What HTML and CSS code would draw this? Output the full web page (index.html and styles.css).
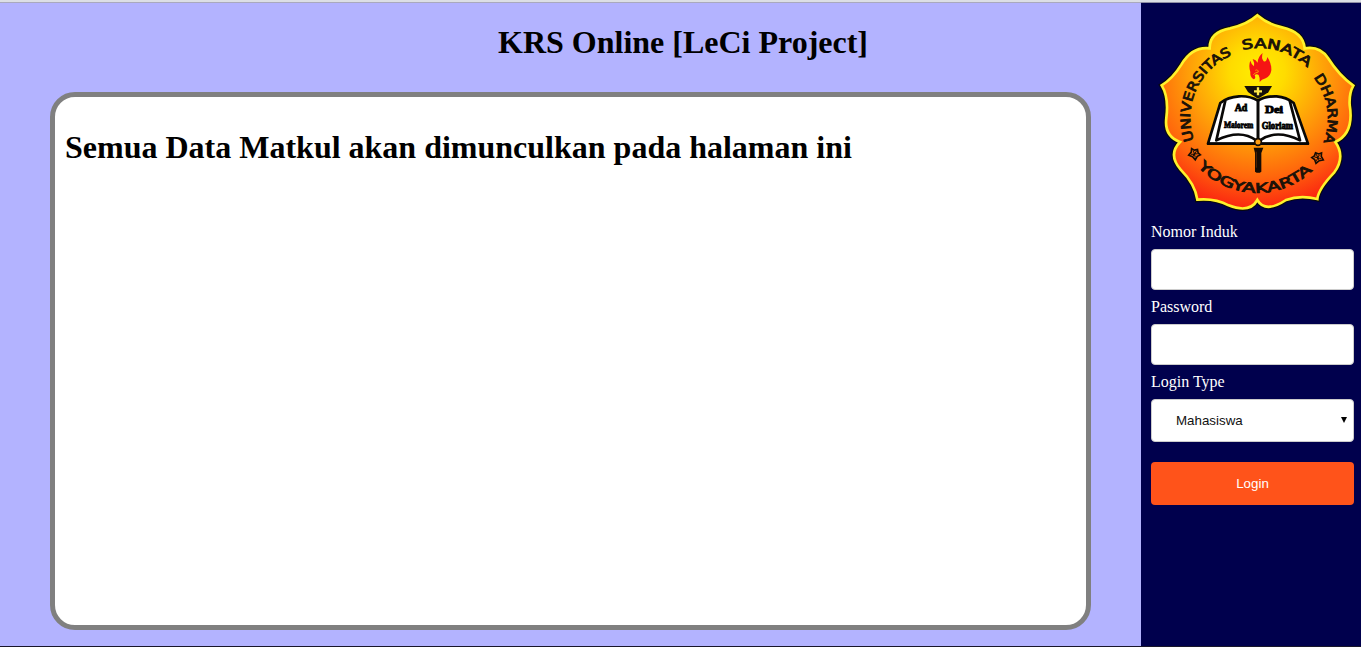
FILE: index.html
```html
<!DOCTYPE html>
<html lang="id">
<head>
<meta charset="utf-8">
<title>KRS Online</title>
<link rel="stylesheet" href="styles.css">
</head>
<body>
<div class="page">
  <main class="main">
    <h1 class="title">KRS Online [LeCi Project]</h1>
    <section class="panel">
      <h1 class="heading">Semua Data Matkul akan dimunculkan pada halaman ini</h1>
    </section>
  </main>
  <aside class="sidebar">
    <svg class="logo" viewBox="0 9 660 645" role="img" aria-label="Universitas Sanata Dharma Yogyakarta">
      <defs>
        <radialGradient id="glow" gradientUnits="userSpaceOnUse" cx="350" cy="215" r="410">
          <stop offset="0" stop-color="#ffee00"/>
          <stop offset=".2" stop-color="#ffdc00"/>
          <stop offset=".5" stop-color="#ff9f08"/>
          <stop offset=".78" stop-color="#ff650c"/>
          <stop offset="1" stop-color="#fb2810"/>
        </radialGradient>
        <path id="petal-shape" d="M349 46Q379 72 423 82Q487 96 491 145Q536 137 561 174Q594 226 637 257Q624 280 626 315Q640 400 583 426Q614 470 580 517Q532 567 529 597Q478 584 435 600Q373 641 349 600Q326 641 263 616Q222 594 169 599Q162 552 119 509Q80 464 117 426Q69 408 76 354Q84 292 62 256Q95 236 121 194Q153 139 206 145Q205 96 267 85Q318 74 349 46Z"/>
        <path id="arc-left" d="M159 421A204 204 0 0 1 276 164"/>
        <path id="arc-top" d="M305 150A208 208 0 0 1 506 210"/>
        <path id="arc-right" d="M518 232A204 204 0 0 1 543 438"/>
        <path id="arc-bottom" d="M170 499A240 240 0 0 0 518 508"/>
        <g id="rosette" fill="none" stroke="#160d05" stroke-width="5">
          <path d="M0-15L7-8L16-7L11 2L12 14L0 11L-12 14L-11 2L-16-7L-7-8Z"/>
          <path d="M-8-5L8 8M8-5L-8 8M0-10V8" stroke-width="3"/>
        </g>
      </defs>
      <use class="petal-shadow" href="#petal-shape"/>
      <use class="petals" href="#petal-shape" fill="url(#glow)"/>
      <g class="ring-text">
        <text><textPath href="#arc-left" textLength="308" lengthAdjust="spacingAndGlyphs">UNIVERSITAS</textPath></text>
        <text><textPath href="#arc-top" textLength="210" lengthAdjust="spacingAndGlyphs">SANATA</textPath></text>
        <text><textPath href="#arc-right" textLength="206" lengthAdjust="spacingAndGlyphs">DHARMA</textPath></text>
        <text><textPath href="#arc-bottom" textLength="384" lengthAdjust="spacingAndGlyphs">YOGYAKARTA</textPath></text>
      </g>
      <use href="#rosette" transform="translate(161 461) rotate(35)"/>
      <use href="#rosette" transform="translate(530 472) rotate(-25)"/>
      <path fill="#f51414" d="M365 159Q360 174 368 184Q376 188 379 171Q392 190 391 211Q388 230 374 235Q361 239 356 246Q357 232 353 225Q346 220 341 226Q346 235 338 238Q326 232 328 216Q322 196 328 182Q331 193 339 199Q341 188 335 177Q345 179 350 188Q350 171 365 159Z"/>
      <path fill="none" stroke="#ff9b00" stroke-width="3" d="M343 211Q351 207 352 216Q342 218 337 224"/>
      <path fill="#15100a" d="M310 258H393L382 277Q369 286 351 296Q334 286 321 276Z"/>
      <path stroke="#ffe94a" stroke-width="7" d="M351 262V286M339 274H363"/>
      <g stroke="#090807" stroke-width="8" stroke-linejoin="round">
        <path fill="#fff" d="M351 302Q326 287 294 289Q260 291 238 309L201 431H501L458 309Q436 291 407 289Q372 288 351 302Z"/>
        <path fill="none" d="M253 302L226 421Q298 386 346 421M446 302L477 421Q406 386 357 421"/>
        <path fill="none" stroke-width="9" d="M351 300V416"/>
      </g>
      <path d="M198 431H504" stroke="#080604" stroke-width="7"/>
      <g class="book-text">
        <text x="281" y="333" textLength="38" lengthAdjust="spacingAndGlyphs">Ad</text>
        <text x="249" y="383" textLength="88" lengthAdjust="spacingAndGlyphs" transform="rotate(1 249 383)">Maiorem</text>
        <text x="372" y="340" textLength="54" lengthAdjust="spacingAndGlyphs">Dei</text>
        <text x="362" y="386" textLength="94" lengthAdjust="spacingAndGlyphs">Gloriam</text>
      </g>
      <path d="M338 443H367L361 459V515Q352 522 342 515V459Z" fill="#140b04"/>
      <path d="M346 455V503" stroke="#743507" stroke-width="2"/>
      <circle cx="351" cy="426" r="10" fill="#ff9d12" stroke="#140c05" stroke-width="5"/>
    </svg>
    <form class="login">
      <label class="label" for="nomor">Nomor Induk</label>
      <input class="field" id="nomor" type="text">
      <label class="label" for="password">Password</label>
      <input class="field" id="password" type="password">
      <label class="label" for="type">Login Type</label>
      <div class="select-wrap">
        <select class="select" id="type"><option>Mahasiswa</option></select>
        <svg class="arrow" viewBox="0 0 6 6"><path d="M0 0H6L3 6Z"/></svg>
      </div>
      <button class="submit" type="button">Login</button>
    </form>
  </aside>
</div>
</body>
</html>
```
FILE: styles.css
```css
* { box-sizing: border-box; }
body { margin: 0; font-family: "Liberation Serif", serif; }
.page {
  display: flex;
  height: 647px;
  overflow: hidden;
  border-top: 2px solid #dcdfe5;
  border-bottom: 1px solid #19162b;
  background: #b3b3ff;
}
.main {
  flex: 1;
  display: flex;
  flex-direction: column;
  border-top: 1px solid #a9a9bd;
  padding: 0 50px 16px;
}
.title, .heading {
  margin: 0;
  font-size: 32px;
  line-height: 37px;
  white-space: nowrap;
}
.title { padding: 21px 0 31px 448px; }
.panel {
  flex: 1;
  background: #fff;
  border: 5px solid #808080;
  border-radius: 25px;
  padding: 32px 10px;
}
.sidebar {
  width: 220px;
  background: #00004d;
  border-top: 1px solid #8f8fa5;
}
.logo { display: block; width: 220px; height: 215px; }
.petal-shadow { stroke: #080810; stroke-width: 15; }
.petals { stroke: #fff22b; stroke-width: 8; }
.ring-text {
  font-family: "DejaVu Sans", sans-serif;
  font-size: 40px;
  fill: #1b1208;
  stroke: #1b1208;
  stroke-width: 2.5;
}
.book-text {
  font-family: "Liberation Serif", serif;
  font-size: 28px;
  font-weight: bold;
  stroke: #000;
  stroke-width: 2.5;
}
.login { display: flex; flex-direction: column; padding: 5px 7px 0 10px; }
.label { color: #fff; font-size: 16px; line-height: 18px; }
.field {
  width: 100%;
  height: 41px;
  margin: 8px 0;
  border: 1px solid #ccc;
  border-radius: 4px;
  background: #fff;
}
.select-wrap { position: relative; height: 43px; margin: 8px 0 20px; }
.select {
  appearance: none;
  width: 100%;
  height: 43px;
  padding: 0 25px 0 24px;
  border: 1px solid #ccc;
  border-radius: 4px;
  background: #fff;
  color: #111;
  font: 13.333px "Liberation Sans", sans-serif;
}
.arrow { position: absolute; right: 7px; top: 18px; width: 6px; height: 6px; }
.submit {
  height: 43px;
  border: 0;
  border-radius: 4px;
  background: #ff531a;
  color: #fff;
  font: 13.333px "Liberation Sans", sans-serif;
}
```
